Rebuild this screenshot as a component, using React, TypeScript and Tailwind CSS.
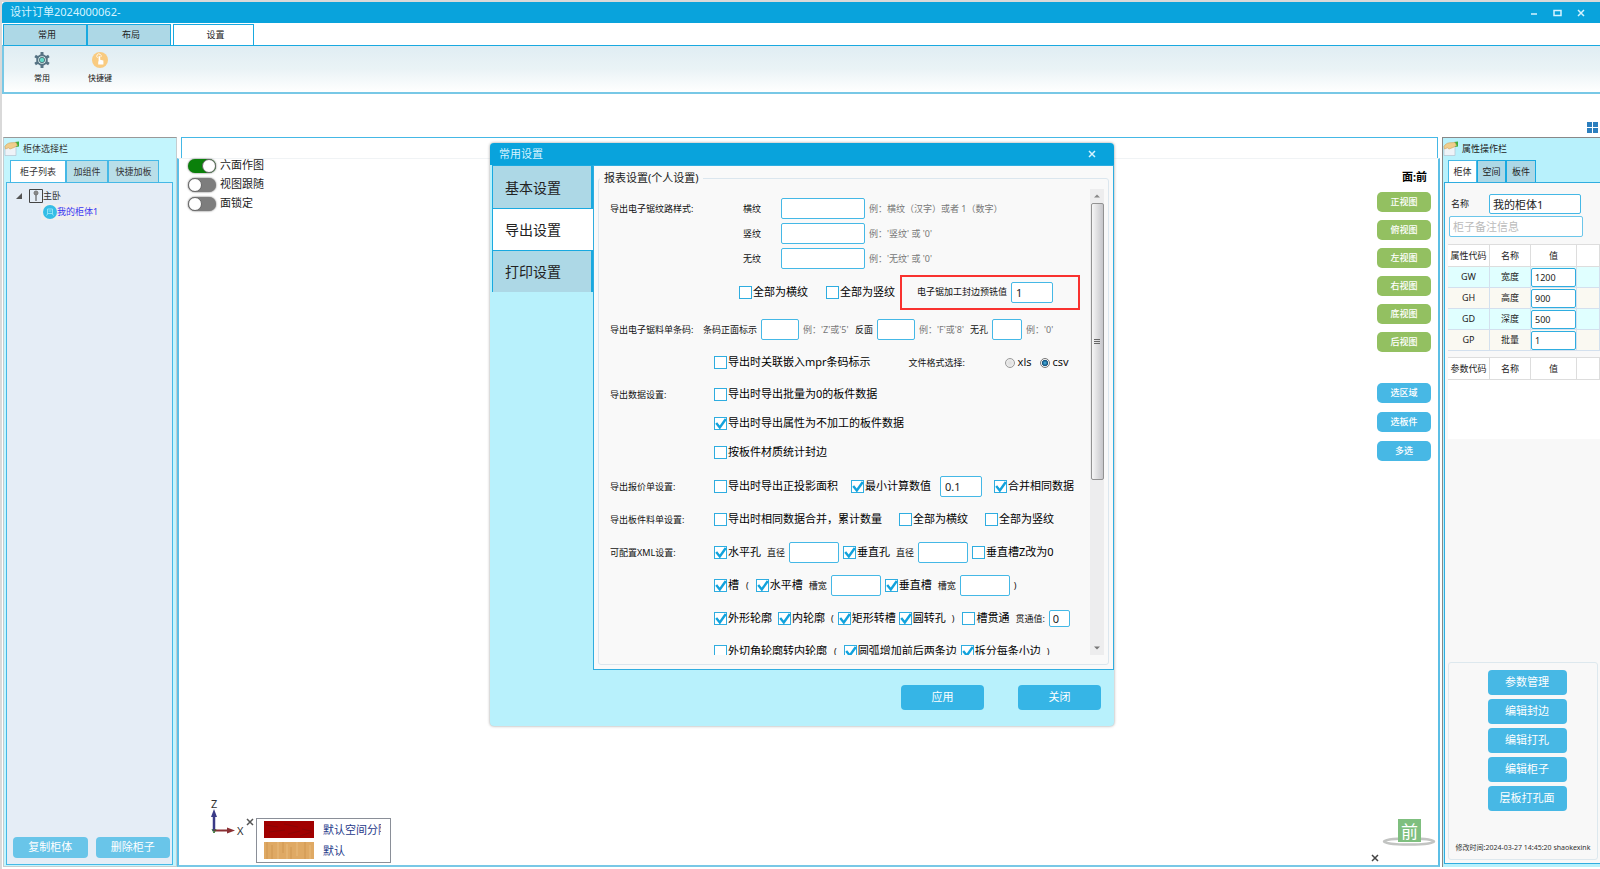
import type { ReactNode } from 'react';

const VIEWS = ['正视图', '俯视图', '左视图', '右视图', '底视图', '后视图'];
const PICKS = ['选区域', '选板件', '多选'];
const ACTIONS = ['参数管理', '编辑封边', '编辑打孔', '编辑柜子', '层板打孔面'];
const PROPS = [
  ['GW', '宽度', '1200'],
  ['GH', '高度', '900'],
  ['GD', '深度', '500'],
  ['GP', '批量', '1'],
];

function Cross({ className }: { className: string }) {
  return (
    <svg viewBox="0 0 8 8" className={className} fill="none" stroke="currentColor" strokeWidth="1.5">
      <path d="M1 1l6 6M7 1L1 7" />
    </svg>
  );
}

function HandIcon() {
  return (
    <svg viewBox="0 0 16 16" className="size-4">
      <path d="M1 5h11v9.500H1z" fill="#eef3f8" stroke="#b4c3d0" strokeWidth=".7" />
      <path d="M11 1l4-.5v5l-3 .5z" fill="#3fae3c" />
      <path d="M1 5.500c1-2 3-3.500 5.500-3.700L12 1.500l1.500 3-3.500 2-4 1.500-1.500-1.200L1.500 8z" fill="#f0cd8c" stroke="#cfa35c" strokeWidth=".6" />
    </svg>
  );
}

function GearIcon() {
  return (
    <svg viewBox="0 0 16 16" className="size-4">
      <g fill="#567384">
        <circle cx="8" cy="8" r="5.800" />
        <rect x="6.500" y="0" width="3" height="16" rx=".5" />
        <rect x="6.500" y="0" width="3" height="16" rx=".5" transform="rotate(60 8 8)" />
        <rect x="6.500" y="0" width="3" height="16" rx=".5" transform="rotate(120 8 8)" />
      </g>
      <circle cx="8" cy="8" r="3.800" fill="#e4f6f4" />
      <circle cx="8" cy="8" r="2.700" fill="#63d9c8" stroke="#49606e" strokeWidth=".8" />
    </svg>
  );
}

function PressIcon() {
  return (
    <svg viewBox="0 0 16 16" className="size-4">
      <circle cx="8" cy="8" r="8" fill="#f9cb80" />
      <path d="M5.600 5.800a2.200 2.200 0 1 1 3.400-.8" fill="none" stroke="#fff" strokeWidth=".8" />
      <path d="M6.600 4.200h1.600v3.600l3.200.6v4H6.200l0-3.200.4.2z" fill="#fff" />
    </svg>
  );
}

function Check({ label, checked = false, className = '' }: { label: string; checked?: boolean; className?: string }) {
  return (
    <label className={`flex shrink-0 items-center gap-px whitespace-nowrap text-[11px] text-black ${className}`}>
      <span className="grid size-[13px]">
        <input
          type="checkbox"
          defaultChecked={checked}
          className="peer col-start-1 row-start-1 size-[13px] appearance-none border border-[#2fade0] bg-white"
        />
        <svg
          viewBox="0 0 13 13"
          className="pointer-events-none invisible col-start-1 row-start-1 size-[13px] peer-checked:visible"
          fill="none"
          stroke="#12a2dc"
          strokeWidth="2.400"
        >
          <path d="M2.200 6l3.600 4.500L11.800 2" />
        </svg>
      </span>
      {label}
    </label>
  );
}

function Field({ label, width, value = '', small = false }: { label: string; width: string; value?: string; small?: boolean }) {
  return (
    <input
      aria-label={label}
      defaultValue={value}
      className={`${width} ${small ? 'h-[17px] px-[3px]' : 'h-[21px] px-1'} shrink-0 rounded-[2px] border border-[#45b8e6] bg-white text-[11px] text-[#222] outline-none`}
    />
  );
}

function Row({ label, height = 'h-[33px]', indent = true, children }: { label?: string; height?: string; indent?: boolean; children: ReactNode }) {
  return (
    <div className={`flex shrink-0 items-center ${height}`}>
      <span className={`${indent ? 'w-[104px]' : 'w-[93px]'} shrink-0`}>{label}</span>
      {children}
    </div>
  );
}

function Hint({ children, className = '' }: { children: ReactNode; className?: string }) {
  return <span className={`text-[9px] text-[#777] ${className}`}>{children}</span>;
}

function Toggle({ label, on = false }: { label: string; on?: boolean }) {
  return (
    <label className="flex h-[19px] items-center gap-1 text-[11px] text-[#222]">
      <input
        type="checkbox"
        defaultChecked={on}
        className="h-[14px] w-7 appearance-none rounded-full bg-[#7d7d7d] shadow-[0_0_2px_#555] before:block before:size-[14px] before:rounded-full before:border before:border-[#666] before:bg-white checked:bg-[#0a800a] checked:before:ml-[14px]"
      />
      {label}
    </label>
  );
}

function SettingsDialog() {
  return (
    <section
      role="dialog"
      aria-label="常用设置"
      className="absolute top-[141px] left-[488px] flex w-[624px] flex-col overflow-hidden rounded-[4px] bg-[#b8f1fc] shadow-[0_0_3px_#999]"
    >
      <header className="flex h-[22px] items-center justify-between bg-[#09a3dc] pr-[18px] pl-[9px] text-[11px] text-[#d5f3ff]">
        常用设置
        <button aria-label="关闭窗口">
          <Cross className="size-2" />
        </button>
      </header>
      <div className="flex">
        <nav className="flex w-[103px] shrink-0 flex-col pl-[2px] text-[14px] text-[#222]">
          <button className="h-[44px] border border-r-2 border-[#19a9e0] bg-[#add8e6] pl-[12px] text-left">基本设置</button>
          <button className="h-[41px] border-l border-[#19a9e0] bg-white pl-[12px] text-left">导出设置</button>
          <button className="h-[42px] border-t border-r-2 border-l border-[#19a9e0] bg-[#add8e6] pl-[12px] text-left">打印设置</button>
        </nav>
        <div className="min-w-0 flex-1 border border-[#2fade0] bg-[#f9f9f9] px-1 pt-[2px] pb-1">
          <fieldset className="flex h-[497px] rounded-[3px] border border-[#dbe6ee] pr-1 pb-[9px] pl-[11px]">
            <legend className="-ml-[10px] px-1 text-[11px] leading-[20px] text-[#222]">报表设置(个人设置)</legend>
            <div className="mt-2 flex min-w-0 flex-1 flex-col overflow-hidden text-[9px] whitespace-nowrap text-[#111]">
              <Row label="导出电子锯纹路样式:" height="h-[25px]">
                <span className="w-[67px] pl-[29px]">横纹</span>
                <Field label="横纹" width="w-[84px]" />
                <Hint className="pl-1">例：横纹（汉字）或者 1（数字）</Hint>
              </Row>
              <Row height="h-[25px]">
                <span className="w-[67px] pl-[29px]">竖纹</span>
                <Field label="竖纹" width="w-[84px]" />
                <Hint className="pl-1">例：'竖纹' 或 '0'</Hint>
              </Row>
              <Row height="h-[25px]">
                <span className="w-[67px] pl-[29px]">无纹</span>
                <Field label="无纹" width="w-[84px]" />
                <Hint className="pl-1">例：'无纹' 或 '0'</Hint>
              </Row>
              <Row height="h-[42px]">
                <Check label="全部为横纹" className="pl-[25px]" />
                <Check label="全部为竖纹" className="pl-[18px]" />
                <label className="ml-[5px] flex h-[35px] w-[180px] shrink-0 items-center gap-1 border-2 border-[#f9322f] pl-[15px]">
                  电子锯加工封边预铣值
                  <Field label="电子锯加工封边预铣值" width="w-[42px]" value="1" />
                </label>
              </Row>
              <Row label="导出电子锯料单条码:" indent={false}>
                <span className="mr-1">条码正面标示</span>
                <Field label="条码正面标示" width="w-[38px]" />
                <Hint className="w-[56px] pl-1">例：'Z'或'5'</Hint>
                <span className="mr-1">反面</span>
                <Field label="反面" width="w-[38px]" />
                <Hint className="w-[55px] pl-1">例：'F'或'8'</Hint>
                <span className="mr-1">无孔</span>
                <Field label="无孔" width="w-[30px]" />
                <Hint className="pl-1">例：'0'</Hint>
              </Row>
              <Row>
                <Check label="导出时关联嵌入mpr条码标示" />
                <span className="w-[134px] pl-[38px]">文件格式选择:</span>
                <label className="flex items-center gap-[3px] text-[11px]">
                  <input type="radio" name="format" className="size-[10px] appearance-none rounded-full border border-[#999] bg-[radial-gradient(#ddd,#f4f4f4)]" />
                  xls
                </label>
                <label className="ml-2 flex items-center gap-[3px] text-[11px]">
                  <input
                    type="radio"
                    name="format"
                    defaultChecked
                    className="size-[10px] appearance-none rounded-full border border-[#777] checked:bg-[radial-gradient(#49b6e6_0,#12507c_50%,#f4f4f4_60%)]"
                  />
                  csv
                </label>
              </Row>
              <div className="flex shrink-0 flex-col pt-[1px] pb-[3px]">
                <Row label="导出数据设置:" height="h-[29px]">
                  <Check label="导出时导出批量为0的板件数据" />
                </Row>
                <Row height="h-[29px]">
                  <Check label="导出时导出属性为不加工的板件数据" checked />
                </Row>
                <Row height="h-[29px]">
                  <Check label="按板件材质统计封边" />
                </Row>
              </div>
              <Row label="导出报价单设置:">
                <Check label="导出时导出正投影面积" />
                <Check label="最小计算数值" checked className="pr-[9px] pl-[13px]" />
                <Field label="最小计算数值" width="w-[42px]" value="0.1" />
                <Check label="合并相同数据" checked className="pl-[12px]" />
              </Row>
              <Row label="导出板件料单设置:">
                <Check label="导出时相同数据合并，累计数量" />
                <Check label="全部为横纹" className="pl-[17px]" />
                <Check label="全部为竖纹" className="pl-[17px]" />
              </Row>
              <Row label="可配置XML设置:">
                <Check label="水平孔" checked />
                <span className="mr-1 ml-[6px]">直径</span>
                <Field label="水平孔直径" width="w-[50px]" />
                <Check label="垂直孔" checked className="pl-1" />
                <span className="mr-1 ml-[6px]">直径</span>
                <Field label="垂直孔直径" width="w-[50px]" />
                <Check label="垂直槽Z改为0" className="pl-1" />
              </Row>
              <Row>
                <Check label="槽" checked />
                <span className="mx-[7px]">(</span>
                <Check label="水平槽" checked />
                <span className="mr-1 ml-[6px]">槽宽</span>
                <Field label="水平槽槽宽" width="w-[50px]" />
                <Check label="垂直槽" checked className="pl-1" />
                <span className="mr-1 ml-[6px]">槽宽</span>
                <Field label="垂直槽槽宽" width="w-[50px]" />
                <span className="ml-1">)</span>
              </Row>
              <Row>
                <Check label="外形轮廓" checked />
                <Check label="内轮廓" checked className="pl-[6px]" />
                <span className="mr-1 ml-[6px]">(</span>
                <Check label="矩形转槽" checked />
                <Check label="圆转孔" checked className="pl-[3px]" />
                <span className="mr-2 ml-[6px]">)</span>
                <Check label="槽贯通" />
                <span className="mr-1 ml-[6px]">贯通值:</span>
                <Field label="贯通值" width="w-[21px]" value="0" small />
              </Row>
              <Row>
                <Check label="外切角轮廓转内轮廓" />
                <span className="mx-[7px]">(</span>
                <Check label="圆弧增加前后两条边" checked />
                <Check label="拆分每条小边" checked className="pl-1" />
                <span className="ml-[6px]">)</span>
              </Row>
            </div>
            <div className="mt-px flex w-[14px] shrink-0 flex-col items-center justify-between bg-[#ededee]">
              <svg viewBox="0 0 14 14" className="size-[14px]">
                <path d="M4 8.500h6L7 5.500z" fill="#888" />
              </svg>
              <div className="flex w-[13px] flex-1 flex-col">
                <div className="flex h-[277px] flex-col items-center justify-center gap-[1px] rounded-[2px] border border-[#929292] bg-linear-to-r from-[#f6f6f6] to-[#c6c6ca]">
                  <i className="h-px w-[6px] bg-[#666]" />
                  <i className="h-px w-[6px] bg-[#666]" />
                  <i className="h-px w-[6px] bg-[#666]" />
                </div>
              </div>
              <svg viewBox="0 0 14 14" className="size-[14px]">
                <path d="M4 5.500h6L7 8.500z" fill="#777" />
              </svg>
            </div>
          </fieldset>
        </div>
      </div>
      <footer className="flex justify-end gap-[34px] pt-[15px] pr-[13px] pb-4 text-[11px] text-white">
        <button className="h-[25px] w-[83px] rounded-[4px] bg-[#36b5e6]">应用</button>
        <button className="h-[25px] w-[83px] rounded-[4px] bg-[#36b5e6]">关闭</button>
      </footer>
    </section>
  );
}

function LeftPanel() {
  return (
    <aside className="flex w-[174px] shrink-0 flex-col border border-t-[#999] border-[#c4cdd0] bg-[#c3f5fd] pr-[3px] pb-[1px] pl-[2px]">
      <div className="-ml-[2px] flex h-[22px] items-center gap-[3px] text-[9px] text-[#333]">
        <HandIcon />
        柜体选择栏
      </div>
      <div className="flex h-[22px] pl-1 text-[9px] text-[#333]">
        <button className="w-[56px] border border-b-0 border-[#45b8e6] bg-white">柜子列表</button>
        <button className="w-[42px] border border-b-0 border-[#45b8e6] bg-[#b9dfe9]">加组件</button>
        <button className="w-[51px] border border-b-0 border-[#45b8e6] bg-[#b9dfe9]">快捷加板</button>
      </div>
      <div className="flex flex-1 flex-col justify-between border border-[#45b8e6] bg-[#e5edf6]">
        <div className="pt-[5px] pl-[9px] text-[9px] leading-4">
          <div className="flex items-center">
            <svg viewBox="0 0 6 6" className="mr-[7px] size-[6px]">
              <path d="M6 0v6H0z" fill="#555" />
            </svg>
            <svg viewBox="0 0 14 14" className="size-[14px]" fill="none" stroke="#444">
              <path d="M.5.500h13v13H.5zM7 5v7" />
              <circle cx="7" cy="4" r="2" fill="#888" stroke="#777" />
            </svg>
            <span className="text-[#333]">主卧</span>
          </div>
          <div className="ml-[25px] flex w-[59px] items-center bg-[#efeff0]">
            <svg viewBox="0 0 14 14" className="ml-[2px] size-[14px]">
              <circle cx="7" cy="7" r="7" fill="#35bde6" />
              <path d="M4.500 9V4h5v5M3.500 10.500L5 8.500h4l1.500 2M5.500 6h3" fill="none" stroke="#8fe3f6" />
            </svg>
            <span className="whitespace-nowrap text-[#3a35f0]">我的柜体1</span>
          </div>
        </div>
        <div className="flex gap-2 pt-[7px] pr-[2px] pb-[6px] pl-[6px] text-[11px] text-white">
          <button className="h-[21px] flex-1 rounded-[4px] bg-[#69c5e9]">复制柜体</button>
          <button className="h-[21px] flex-1 rounded-[4px] bg-[#69c5e9]">删除柜子</button>
        </div>
      </div>
    </aside>
  );
}

function Viewport() {
  return (
    <main className="flex min-w-0 flex-1 flex-col">
      <div className="ml-1 mr-[2px] h-[21px] border border-b-0 border-[#45b8e6] bg-white" />
      <div className="flex flex-1 flex-col justify-between border-x-2 border-t border-b-2 border-x-[#5cbfe6] border-t-[#f0f3f5] border-b-[#78c8e6] bg-white">
        <div className="flex items-start justify-between pr-[7px] pl-[9px]">
          <div className="-mt-[3px] flex flex-col">
            <Toggle label="六面作图" on />
            <Toggle label="视图跟随" />
            <Toggle label="面锁定" />
          </div>
          <div className="flex w-[54px] flex-col gap-2 pt-[11px] text-[9px] font-medium text-white">
            <p className="pr-1 text-right text-[11px] leading-[14px] font-bold text-black">面:前</p>
            {VIEWS.map((name) => (
              <button key={name} className="h-5 rounded-[5px] bg-[#93c061]">
                {name}
              </button>
            ))}
            <div className="flex flex-col gap-[9px] pt-[23px]">
              {PICKS.map((name) => (
                <button key={name} className="h-5 rounded-[5px] bg-[#47b8e5]">
                  {name}
                </button>
              ))}
            </div>
          </div>
        </div>
        <div className="flex items-end justify-between pr-px pb-[2px]">
          <div className="flex items-start pl-[28px]">
            <svg viewBox="0 0 40 50" className="-mt-[22px] h-[50px] w-10" fontFamily="Noto Sans" fontSize="11">
              <path d="M7 35V19" stroke="#3a3a86" strokeWidth="2.500" />
              <path d="M4 21l3-8 3 8z" fill="#3a3a86" />
              <path d="M7 34.500h14" stroke="#8a2f33" strokeWidth="2" />
              <path d="M20 31.500l8 3-8 3z" fill="#8a2f33" />
              <path d="M5 33l2 4 2-4" stroke="#2c6b2c" fill="none" />
              <text x="4" y="12" fill="#333">Z</text>
              <text x="30" y="39" fill="#333">X</text>
            </svg>
            <button aria-label="关闭图例" className="-ml-px text-[#555]">
              <Cross className="size-2" />
            </button>
            <div className="ml-[2px] flex h-[45px] w-[135px] flex-col gap-1 border border-[#8a8f98] px-[7px] pt-[2px] text-[11px] leading-[17px] text-[#1f3a8a]">
              <div className="flex gap-[9px]">
                <svg viewBox="0 0 50 17" className="h-[17px] w-[50px] shrink-0">
                  <path d="M0 0h50v17H0z" fill="#a10000" />
                  <path d="M2 4l12 2M20 3l14 3M38 8l9 2M5 11l16-2M24 13l12-3M36 15l12-4" stroke="#8a0505" fill="none" />
                </svg>
                <span className="w-[58px] overflow-hidden whitespace-nowrap">默认空间分隔</span>
              </div>
              <div className="flex gap-[9px]">
                <svg viewBox="0 0 50 17" className="h-[17px] w-[50px] shrink-0">
                  <path d="M0 0h50v17H0z" fill="#dfa964" />
                  <path d="M3 0v17M8 3v14M19 0v11M27 5v12M41 0v17" stroke="#cf9650" />
                  <path d="M14 0v17M23 2v15M33 0v14M46 3v14" stroke="#e9bb7c" />
                </svg>
                <span>默认</span>
              </div>
            </div>
          </div>
          <div className="flex w-[66px] flex-col">
            <svg viewBox="0 0 54 28" className="ml-[11px] h-7 w-[54px]" fontFamily="Noto Sans CJK SC">
              <ellipse cx="27" cy="22.500" rx="25" ry="3" fill="none" stroke="#c2c4c2" strokeWidth="2.500" />
              <path d="M16 0h23v23H16z" fill="#7fbf7f" />
              <text x="27.500" y="18.500" textAnchor="middle" fontSize="17" fill="#fff">前</text>
            </svg>
            <button aria-label="关闭导航" className="mt-[7px] mb-px text-[#444]">
              <Cross className="size-[8px]" />
            </button>
          </div>
        </div>
      </div>
    </main>
  );
}

function HeadRow({ first }: { first: string }) {
  return (
    <thead>
      <tr className="h-[22px] bg-white [&>th]:border-r [&>th]:border-b [&>th]:border-[#ddd] [&>th]:font-normal">
        <th className="w-[42px]">{first}</th>
        <th className="w-[41px]">名称</th>
        <th className="w-[46px]">值</th>
        <th />
      </tr>
    </thead>
  );
}

function RightPanel() {
  return (
    <aside className="ml-[2px] flex w-[158px] shrink-0 flex-col border-t border-l border-[#888] bg-[#b8f1fc] pb-[3px]">
      <div className="flex h-[22px] items-center gap-[3px] text-[9px] text-[#222]">
        <HandIcon />
        属性操作栏
      </div>
      <div className="flex h-[22px] pl-[5px] text-[9px] text-[#222]">
        <button className="w-[29px] border border-b-0 border-[#45b8e6] bg-white">柜体</button>
        <button className="w-[29px] border border-b-0 border-[#19a9e0] bg-[#add8e6]">空间</button>
        <button className="w-[30px] border border-b-0 border-[#19a9e0] bg-[#add8e6]">板件</button>
      </div>
      <div className="ml-[1px] flex flex-1 flex-col border border-r-0 border-[#2fade0] bg-[#f8f8f8] pt-[11px] pb-[3px] pl-[3px] text-[9px] text-[#222]">
        <label className="flex h-[20px] items-center pl-[3px]">
          <span className="w-[38px]">名称</span>
          <input defaultValue="我的柜体1" className="h-5 w-[92px] rounded-[2px] border border-[#45b8e6] bg-white px-[3px] text-[11px] outline-none" />
        </label>
        <input
          aria-label="柜子备注信息"
          placeholder="柜子备注信息"
          className="mt-[2px] ml-[1px] h-[21px] w-[134px] rounded-[2px] border border-[#6cc6ea] bg-white px-[3px] text-[11px] outline-none placeholder:text-[#bbb]"
        />
        <table className="mt-[7px] w-full table-fixed border-separate border-spacing-0 border-t border-[#ddd] text-center">
          <HeadRow first="属性代码" />
          <tbody>
            {PROPS.map(([code, name, value]) => (
              <tr key={code} className="h-[21px] odd:bg-[#e0ffff] even:bg-[#faf9f2] [&>td]:border-r [&>td]:border-b [&>td]:border-[#d3e0ee] [&>td]:p-0">
                <td>{code}</td>
                <td>{name}</td>
                <td>
                  <input aria-label={name} defaultValue={value} className="block h-[19px] w-full rounded-[2px] border border-[#2fade0] bg-white px-[3px] outline-none" />
                </td>
                <td />
              </tr>
            ))}
          </tbody>
        </table>
        <div className="mt-[6px] h-[82px] bg-white">
          <table className="w-full table-fixed border-separate border-spacing-0 border-t border-[#ddd] text-center">
            <HeadRow first="参数代码" />
          </table>
        </div>
        <div className="mt-auto mr-[2px] flex h-[198px] flex-col items-center rounded-[3px] border border-[#dde8ee] pt-[7px] text-[11px] text-white">
          <div className="flex flex-col gap-1 pl-2">
            {ACTIONS.map((name) => (
              <button key={name} className="h-[25px] w-[79px] rounded-[4px] bg-[#47b8e5]">
                {name}
              </button>
            ))}
          </div>
          <p className="mt-auto pb-[6px] text-[7px] leading-[10px] whitespace-nowrap text-[#333]">修改时间:2024-03-27 14:45:20 shaokexink</p>
        </div>
      </div>
    </aside>
  );
}

export default function App() {
  return (
    <div className="relative flex min-h-screen w-full flex-col overflow-hidden border-t-2 border-l-2 border-[#d9d9d9] bg-white font-['Noto_Sans','Noto_Sans_CJK_SC',sans-serif]">
      <header className="flex h-[21px] items-center justify-between rounded-tl-[4px] bg-[#09a3dc] pr-[15px] pl-2 text-[11px] text-[#d5f3ff]">
        设计订单2024000062-
        <div className="flex items-center gap-[15px]">
          <button aria-label="最小化">
            <svg viewBox="0 0 8 8" className="size-2" fill="none" stroke="currentColor" strokeWidth="1.500">
              <path d="M1 5h6" />
            </svg>
          </button>
          <button aria-label="最大化">
            <svg viewBox="0 0 9 8" className="h-2 w-[9px]" fill="none" stroke="currentColor" strokeWidth="1.500">
              <path d="M1 1.500h7v5H1z" />
            </svg>
          </button>
          <button aria-label="关闭">
            <Cross className="size-2" />
          </button>
        </div>
      </header>
      <nav className="flex h-[22px] pt-[1px] pl-[1px] text-[9px] text-[#222]">
        <button className="w-[84px] border border-b-0 border-[#19a9e0] bg-[#add8e6] pl-1">常用</button>
        <button className="w-[84px] border border-b-0 border-[#19a9e0] bg-[#add8e6] pl-1">布局</button>
        <button className="ml-[2px] w-[81px] border border-b-0 border-[#19a9e0] bg-white pl-1">设置</button>
      </nav>
      <div className="flex h-[49px] items-start gap-[20px] border-t border-b-2 border-l-2 border-t-[#19a9e0] border-b-[#78c8e6] border-l-[#78c8e6] bg-linear-to-b from-[#e0edf3] via-[#eaf3f6] to-white pt-[6px] pl-[19px] text-[8px] leading-[10px] text-[#111]">
        <button className="flex w-[38px] flex-col items-center gap-[5px]">
          <GearIcon />
          常用
        </button>
        <button className="flex w-[38px] flex-col items-center gap-[5px]">
          <PressIcon />
          快捷键
        </button>
      </div>
      <div className="flex h-[43px] items-end justify-end pr-[2px] pb-1">
        <button aria-label="布局网格">
          <svg viewBox="0 0 11 11" className="size-[11px]" fill="#2c7fbe">
            <path d="M0 0h5v5H0zM6 0h5v5H6zM0 6h5v5H0zM6 6h5v5H6z" />
          </svg>
        </button>
      </div>
      <div className="flex flex-1 pb-[2px] pl-[1px]">
        <LeftPanel />
        <Viewport />
        <RightPanel />
      </div>
      <SettingsDialog />
    </div>
  );
}
